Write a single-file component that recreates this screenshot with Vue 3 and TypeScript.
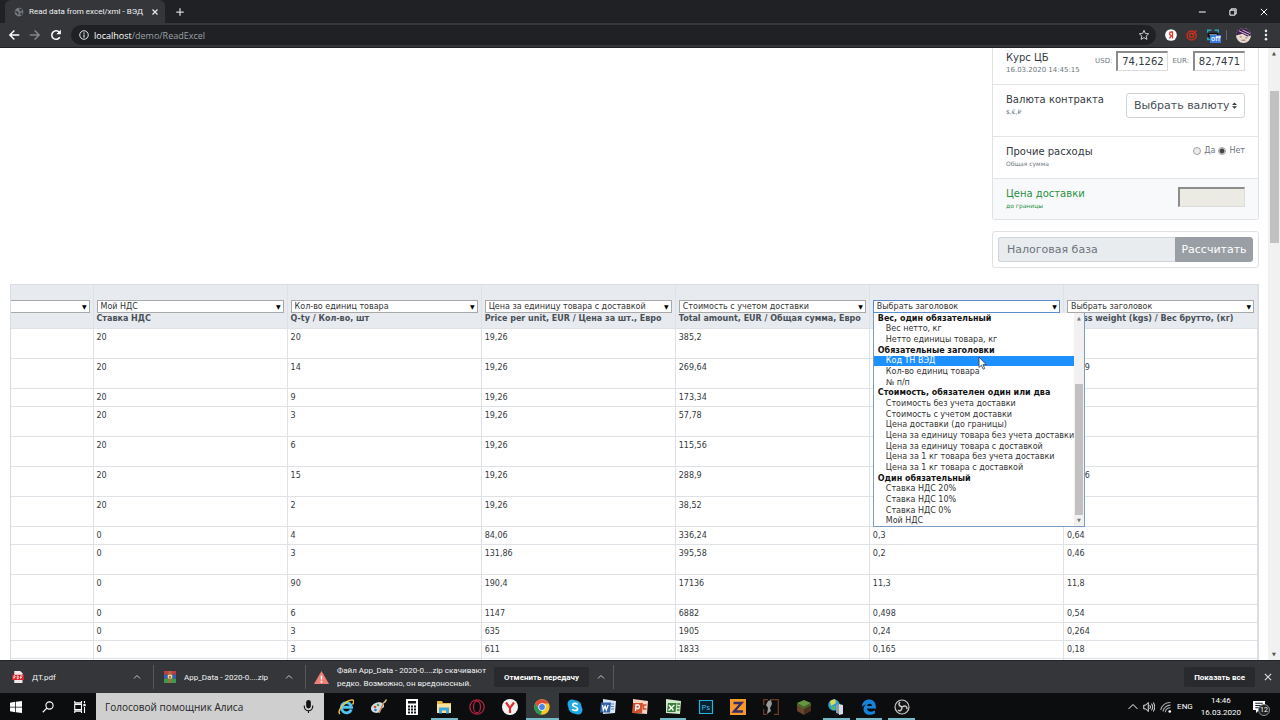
<script setup lang="ts">
import { ref } from 'vue'

interface Column { selected: string; title: string; open?: boolean }
interface Row { tall: boolean; cells: string[] }
interface MenuEntry { label: string; group?: boolean }

const columns: Column[] = [
  { selected: 'Мой НДС', title: 'Ставка НДС' },
  { selected: 'Кол-во единиц товара', title: 'Q-ty / Кол-во, шт' },
  { selected: 'Цена за единицу товара с доставкой', title: 'Price per unit, EUR / Цена за шт., Евро' },
  { selected: 'Стоимость с учетом доставки', title: 'Total amount, EUR / Общая сумма, Евро' },
  { selected: 'Выбрать заголовок', title: '', open: true },
  { selected: 'Выбрать заголовок', title: 'Gross weight (kgs) / Вес брутто, (кг)' },
]

const rows: Row[] = [
  { tall: true, cells: ['20', '20', '19,26', '385,2', '', ''] },
  { tall: true, cells: ['20', '14', '19,26', '269,64', '', '0,279'] },
  { tall: false, cells: ['20', '9', '19,26', '173,34', '', ''] },
  { tall: true, cells: ['20', '3', '19,26', '57,78', '', ''] },
  { tall: true, cells: ['20', '6', '19,26', '115,56', '', ''] },
  { tall: true, cells: ['20', '15', '19,26', '288,9', '', '0,296'] },
  { tall: true, cells: ['20', '2', '19,26', '38,52', '', ''] },
  { tall: false, cells: ['0', '4', '84,06', '336,24', '0,3', '0,64'] },
  { tall: true, cells: ['0', '3', '131,86', '395,58', '0,2', '0,46'] },
  { tall: true, cells: ['0', '90', '190,4', '17136', '11,3', '11,8'] },
  { tall: false, cells: ['0', '6', '1147', '6882', '0,498', '0,54'] },
  { tall: false, cells: ['0', '3', '635', '1905', '0,24', '0,264'] },
  { tall: false, cells: ['0', '3', '611', '1833', '0,165', '0,18'] },
  { tall: false, cells: ['', '', '', '', '', ''] },
]

const entries: MenuEntry[] = [
  { label: 'Вес, один обязательный', group: true },
  { label: 'Вес нетто, кг' },
  { label: 'Нетто единицы товара, кг' },
  { label: 'Обязательные заголовки', group: true },
  { label: 'Код ТН ВЭД' },
  { label: 'Кол-во единиц товара' },
  { label: '№ п/п' },
  { label: 'Стоимость, обязателен один или два', group: true },
  { label: 'Стоимость без учета доставки' },
  { label: 'Стоимость с учетом доставки' },
  { label: 'Цена доставки (до границы)' },
  { label: 'Цена за единицу товара без учета доставки' },
  { label: 'Цена за единицу товара с доставкой' },
  { label: 'Цена за 1 кг товара без учета доставки' },
  { label: 'Цена за 1 кг товара с доставкой' },
  { label: 'Один обязательный', group: true },
  { label: 'Ставка НДС 20%' },
  { label: 'Ставка НДС 10%' },
  { label: 'Ставка НДС 0%' },
  { label: 'Мой НДС' },
]

const active = ref('Код ТН ВЭД')
const other = ref('no')
const usd = ref('74,1262')
const eur = ref('82,7471')

const apps = [
  { id: 'ie', name: 'Internet Explorer' },
  { id: 'paint', name: 'Paint' },
  { id: 'calc', name: 'Калькулятор' },
  { id: 'files', name: 'Проводник', running: true },
  { id: 'opera', name: 'Opera' },
  { id: 'yandex', name: 'Яндекс Браузер' },
  { id: 'chrome', name: 'Chrome', running: true, current: true },
  { id: 'skype', name: 'Skype' },
  { id: 'word', name: 'Word' },
  { id: 'ppt', name: 'PowerPoint' },
  { id: 'excel', name: 'Excel', running: true },
  { id: 'ps', name: 'Photoshop' },
  { id: 'zed', name: 'Zed' },
  { id: 'game', name: 'Game' },
  { id: 'cube', name: 'Minecraft' },
  { id: 'iis', name: 'IIS', running: true },
  { id: 'edge', name: 'Edge', running: true },
  { id: 'obs', name: 'OBS', running: true },
]
</script>

<template>
  <div class="screen">
    <header class="browser">
      <div class="tabs">
        <div class="tab">
          <svg class="i10" viewBox="0 0 16 16"><circle cx="8" cy="8" r="7" fill="#777a7e" /><path d="M2 6l4 1 2 3-2 3-1-3-3-2zM8 2l5 2-1 3-3-1zM10 9l4 0-2 4-2-1z" fill="#34363a" /></svg>
          <span class="tab-title">Read data from excel/xml - ВЭД</span>
          <button class="plain" aria-label="Закрыть вкладку"><svg class="i8" viewBox="0 0 16 16"><path d="M3 3l10 10M13 3L3 13" stroke="#e8eaed" stroke-width="2.4" /></svg></button>
        </div>
        <button class="plain newtab" aria-label="Новая вкладка"><svg class="i10" viewBox="0 0 16 16"><path d="M8 2v12M2 8h12" stroke="#d5d7da" stroke-width="2" /></svg></button>
        <div class="window-buttons">
          <button class="plain" aria-label="Свернуть"><svg class="i10" viewBox="0 0 16 16"><path d="M3 8h11" stroke="#fff" stroke-width="1.6" /></svg></button>
          <button class="plain" aria-label="Восстановить"><svg class="i10" viewBox="0 0 16 16"><path d="M3 5h8v8H3zM5 5V3h8v8h-2" fill="none" stroke="#fff" stroke-width="1.6" /></svg></button>
          <button class="plain" aria-label="Закрыть"><svg class="i10" viewBox="0 0 16 16"><path d="M3 3l10 10M13 3L3 13" stroke="#fff" stroke-width="1.6" /></svg></button>
        </div>
      </div>
      <div class="toolbar">
        <button class="plain" aria-label="Назад"><svg class="i12" viewBox="0 0 16 16"><path d="M15 8H3M8.500 2L2.500 8l6 6" fill="none" stroke="#fff" stroke-width="2" /></svg></button>
        <button class="plain" aria-label="Вперёд"><svg class="i12" viewBox="0 0 16 16"><path d="M1 8h12M7.500 2l6 6-6 6" fill="none" stroke="#85878a" stroke-width="2" /></svg></button>
        <button class="plain" aria-label="Обновить"><svg class="i12" viewBox="0 0 16 16"><path d="M13 11a5.700 5.700 0 1 1-.5-6.500" fill="none" stroke="#fff" stroke-width="2" /><path d="M14.500 1v6h-6z" fill="#fff" /></svg></button>
        <div class="address">
          <svg class="i10" viewBox="0 0 16 16"><circle cx="8" cy="8" r="6.800" fill="none" stroke="#e8eaed" stroke-width="1.600" /><path d="M8 7v5M8 4v1.800" stroke="#e8eaed" stroke-width="1.900" /></svg>
          <span class="url"><b>localhost</b>/demo/ReadExcel</span>
          <svg class="i12" viewBox="0 0 16 16"><path d="M8 1.800l1.800 4.200 4.500.4-3.400 3 1 4.500L8 11.500l-3.900 2.400 1-4.500-3.400-3 4.500-.4z" fill="none" stroke="#dadce0" stroke-width="1.200" /></svg>
        </div>
        <div class="extensions">
          <svg class="i12" viewBox="0 0 16 16"><circle cx="8" cy="8" r="7.800" fill="#fff" /><path d="M10 12.500V4H8.500a2.300 2.300 0 0 0 0 4.700H10M8.500 8.700L6 12.500" fill="none" stroke="#e4312b" stroke-width="1.700" /></svg>
          <svg class="i12" viewBox="0 0 16 16"><circle cx="7.500" cy="8.500" r="6" fill="none" stroke="#c6311f" stroke-width="2" /><circle cx="7.500" cy="8.500" r="2.800" fill="none" stroke="#c6311f" stroke-width="1.800" /><path d="M8 8l6-6" stroke="#c6311f" stroke-width="1.800" /></svg>
          <div class="ext-badge">
            <svg class="i12" viewBox="0 0 16 16"><path d="M1 5V1.500h5M10 1.500h5V5M1 11v3h4" fill="none" stroke="#2ba3bd" stroke-width="2" /><path d="M1 5h14v6H1z" fill="#0e1114" /><path d="M3 7.500h10" stroke="#8b9094" stroke-width="1.500" /></svg>
            <span>off</span>
          </div>
          <i></i>
          <svg class="i15" viewBox="0 0 16 16"><circle cx="8" cy="8" r="8" fill="#eadbd0" /><path d="M0 8C0 3 4 0 8 0c5 0 8 4 8 8l-4 1-5-3-7 2z" fill="#41214f" /><path d="M3 3l11 5M7 2l8 4" stroke="#d9bfdc" stroke-width="1" /><path d="M4 9.500h2M10 10.500h2M6 13h4" stroke="#8a5a5e" /></svg>
          <button class="plain" aria-label="Меню"><svg class="i12" viewBox="0 0 16 16"><g fill="#e8eaed"><circle cx="8" cy="2.500" r="1.700" /><circle cx="8" cy="8" r="1.700" /><circle cx="8" cy="13.500" r="1.700" /></g></svg></button>
        </div>
      </div>
    </header>

    <div class="viewport">
      <main class="page">
        <aside class="side">
          <section class="card list">
            <div class="item rate">
              <div><h2>Курс ЦБ</h2><p class="date">16.03.2020 14:45:15</p></div>
              <div class="rates">
                <label for="usd">USD:</label><input id="usd" v-model="usd" type="text">
                <label for="eur">EUR:</label><input id="eur" v-model="eur" type="text">
              </div>
            </div>
            <div class="item currency">
              <div><h2><label for="currency">Валюта контракта</label></h2><p>$,€,₽</p></div>
              <div class="currency-select">
                <select id="currency"><option>Выбрать валюту</option></select>
                <svg viewBox="0 0 4 5"><path d="M2 0L0 2h4zM2 5L0 3h4z" fill="#343a40" /></svg>
              </div>
            </div>
            <div class="item other">
              <div><h2>Прочие расходы</h2><p>Общая сумма</p></div>
              <div class="radios">
                <input id="yes" v-model="other" type="radio" name="other" value="yes"><label for="yes">Да</label>
                <input id="no" v-model="other" type="radio" name="other" value="no"><label for="no">Нет</label>
              </div>
            </div>
            <div class="item delivery">
              <div><h2><label for="delivery">Цена доставки</label></h2><p>до границы</p></div>
              <input id="delivery" type="text" disabled>
            </div>
          </section>
          <form class="card calc" @submit.prevent>
            <input type="text" placeholder="Налоговая база" aria-label="Налоговая база" disabled>
            <button type="submit">Рассчитать</button>
          </form>
        </aside>

        <div class="sheet">
          <table>
            <colgroup><col class="first"><col v-for="(c, i) in columns" :key="i"></colgroup>
            <thead>
              <tr>
                <th class="cut">
                  <div class="picker"><select aria-label="Заголовок столбца"><option></option></select><span class="arrow">▼</span></div>
                </th>
                <th v-for="(c, i) in columns" :key="i">
                  <div class="picker" :class="{ open: c.open }">
                    <select :aria-label="c.title || 'Заголовок столбца'"><option>{{ c.selected }}</option></select><span class="arrow">▼</span>
                    <div v-if="c.open" class="menu">
                      <ul role="listbox" aria-label="Заголовки">
                        <li v-for="e in entries" :key="e.label" :class="{ group: e.group, active: e.label === active }">
                          <template v-if="e.group">{{ e.label }}</template>
                          <button v-else type="button" role="option" :aria-selected="e.label === active" @mouseenter="active = e.label">{{ e.label }}</button>
                        </li>
                      </ul>
                      <div class="menu-bar"><span>▲</span><i></i><span>▼</span></div>
                      <svg class="cursor" viewBox="0 0 9 14"><path d="M1 1v10.500l2.400-2.200 1.700 3.900 1.600-.7L5 8.700h3.300z" fill="#fff" stroke="#333" stroke-width=".8" /></svg>
                    </div>
                  </div>
                  <div class="col-title">{{ c.title }}</div>
                </th>
              </tr>
            </thead>
            <tbody>
              <tr v-for="(r, i) in rows" :key="i" :class="{ tall: r.tall }">
                <td></td>
                <td v-for="(v, j) in r.cells" :key="j">{{ v }}</td>
              </tr>
            </tbody>
          </table>
        </div>
      </main>
      <div class="scrollbar"><span>▲</span><i></i><span>▼</span></div>
    </div>

    <div class="downloads">
      <div class="download">
        <svg class="i12" viewBox="0 0 16 16"><path d="M3 0h8l3 3v13H3z" fill="#f3e7e7" /><path d="M0 5h16v7H0z" fill="#d8232a" /><path d="M2.500 10.500v-4h1.500q1.500 1 0 2H2.500M7 6.500v4h1q2-2 0-4zM11.500 10.500v-4H14M11.500 8.500h2" fill="none" stroke="#fff" stroke-width="1" /></svg>
        <span class="file">ДТ.pdf</span>
        <button class="plain" aria-label="Действия"><svg class="i8" viewBox="0 0 16 16"><path d="M2 11l6-6 6 6" fill="none" stroke="#c6c8cb" stroke-width="2" /></svg></button>
      </div>
      <div class="download archive">
        <svg class="i12" viewBox="0 0 16 16"><path d="M0 0h16v5H0z" fill="#c23a4c" /><path d="M0 5h16v5H0z" fill="#3460b8" /><path d="M0 10h16v6H0z" fill="#3d9852" /><path d="M6 0h4v16H6z" fill="#a87332" /><path d="M5 5h6v5H5z" fill="#f1d489" /><path d="M7 7h2v2H7z" fill="#59401f" /></svg>
        <span class="file">App_Data - 2020-0....zip</span>
        <button class="plain" aria-label="Действия"><svg class="i8" viewBox="0 0 16 16"><path d="M2 11l6-6 6 6" fill="none" stroke="#c6c8cb" stroke-width="2" /></svg></button>
      </div>
      <div class="download warn">
        <svg class="i15" viewBox="0 0 16 16"><path d="M8 1l8 14H0z" fill="#ee8079" /><path d="M8 6v4M8 11.500v2" stroke="#fff" stroke-width="1.600" /></svg>
        <span class="warn-text">Файл App_Data - 2020-0....zip скачивают<br>редко. Возможно, он вредоносный.</span>
        <button class="dark">Отменить передачу</button>
        <button class="plain" aria-label="Действия"><svg class="i8" viewBox="0 0 16 16"><path d="M2 11l6-6 6 6" fill="none" stroke="#c6c8cb" stroke-width="2" /></svg></button>
      </div>
      <button class="dark all">Показать все</button>
      <button class="plain" aria-label="Закрыть панель"><svg class="i10" viewBox="0 0 16 16"><path d="M3 3l10 10M13 3L3 13" stroke="#dadce0" stroke-width="1.800" /></svg></button>
    </div>

    <footer class="taskbar">
      <div class="system">
        <button class="plain" aria-label="Пуск"><svg class="i12" viewBox="0 0 16 16"><path d="M0 2.200L7 1v6.500H0zM8 .9L16 0v7.500H8zM0 8.500h7V15l-7-1.200zM8 8.500h8V16l-8-.9z" fill="#fff" /></svg></button>
        <button class="plain" aria-label="Поиск"><svg class="i12" viewBox="0 0 16 16"><circle cx="10" cy="6" r="4.800" fill="none" stroke="#fff" stroke-width="1.500" /><path d="M6.500 9.500L1 15" stroke="#fff" stroke-width="1.600" /></svg></button>
        <button class="plain" aria-label="Представление задач"><svg class="i12" viewBox="0 0 16 16"><path d="M1 4.500h9v7H1zM1 0v2.500h9V0M1 16v-2.500h9V16M14 0v3M14 8v8" fill="none" stroke="#fff" stroke-width="1.500" /><path d="M12.500 4h3v3h-3z" fill="#fff" /></svg></button>
      </div>
      <div class="search">
        <input type="text" placeholder="Голосовой помощник Алиса" aria-label="Голосовой помощник Алиса">
        <svg class="i15" viewBox="0 0 16 16"><rect x="5.500" y="1" width="5" height="9" rx="2.500" fill="#111" /><path d="M3.500 7v1a4.500 4.500 0 0 0 9 0V7M8 12.500V15" fill="none" stroke="#111" stroke-width="1.200" /></svg>
      </div>
      <nav class="apps">
        <button v-for="a in apps" :key="a.id" class="app" :class="{ running: a.running, current: a.current }" :aria-label="a.name">
          <svg v-if="a.id === 'ie'" class="i16" viewBox="0 0 16 16"><path d="M13.300 10.500A5.100 5.100 0 1 1 13.600 8.300H4.500" fill="none" stroke="#52c3f1" stroke-width="2.900" /><path d="M2 15C-2 12 8 1 14 1c3 0 1.500 3 .5 4.500" fill="none" stroke="#f4c63d" stroke-width="1.400" /></svg>
          <svg v-else-if="a.id === 'paint'" class="i16" viewBox="0 0 16 16"><path d="M0 9.500c0-4 6-7 10-6 4 1 4 5 1 6-2 .5-1 2-2 3-3 3-9 1-9-3z" fill="#cfdde7" /><circle cx="4" cy="8" r="1.300" fill="#d34b37" /><circle cx="7" cy="6" r="1.300" fill="#4d9d4b" /><circle cx="4.500" cy="11" r="1.300" fill="#2f77c8" /><path d="M8 14l5-11" stroke="#c98b4d" stroke-width="1.600" /><path d="M12.500 3.500L15 0l1 1-2 3z" fill="#e7cf9a" /></svg>
          <svg v-else-if="a.id === 'calc'" class="i16" viewBox="0 0 16 16"><path d="M2 0h12v16H2z" fill="#fff" /><path d="M4 2h8v2.500H4zM4 6.500h2v2H4zM7 6.500h2v2H7zM10 6.500h2v2h-2zM4 9.500h2v2H4zM7 9.500h2v2H7zM10 9.500h2v2h-2zM4 12.500h2v2H4zM7 12.500h2v2H7zM10 12.500h2v2h-2z" fill="#14171a" /></svg>
          <svg v-else-if="a.id === 'files'" class="i16" viewBox="0 0 16 16"><path d="M1 2h5l1 2h8v10H1z" fill="#e3b64c" /><path d="M1 5h14v9H1z" fill="#fbe29a" /><path d="M3 8.500h10v6h-3v-3H6v3H3z" fill="#41a8dd" /></svg>
          <svg v-else-if="a.id === 'opera'" class="i16" viewBox="0 0 16 16"><circle cx="8" cy="8" r="7.200" fill="none" stroke="#b0233f" stroke-width="1.300" /><ellipse cx="8" cy="8" rx="3.500" ry="6" fill="none" stroke="#b0233f" stroke-width="1.300" /></svg>
          <svg v-else-if="a.id === 'yandex'" class="i16" viewBox="0 0 16 16"><circle cx="8" cy="8" r="8" fill="#f3f3f3" /><path d="M4 3.500L8 9l4-5.500M8 9v5" fill="none" stroke="#e22b2b" stroke-width="2.200" /></svg>
          <svg v-else-if="a.id === 'chrome'" class="i16" viewBox="0 0 16 16"><circle cx="8" cy="8" r="7.700" fill="#f6c52c" /><path d="M1.300 4.200A7.700 7.700 0 0 1 14.700 4.500H8L4.700 9.500z" fill="#dc4b3e" /><path d="M1.300 4.200L4.800 10l3.200 1.500L6.800 15.600A7.700 7.700 0 0 1 1.300 4.200z" fill="#239b56" /><circle cx="8" cy="8" r="3.700" fill="#fff" /><circle cx="8" cy="8" r="2.900" fill="#4384ee" /></svg>
          <svg v-else-if="a.id === 'skype'" class="i16" viewBox="0 0 16 16"><circle cx="5" cy="5" r="4.500" fill="#20a7e4" /><circle cx="11" cy="11" r="4.500" fill="#20a7e4" /><circle cx="8" cy="8" r="6.700" fill="#20a7e4" /><path d="M10.500 5.500C9.500 3.800 5.500 4 5.700 6c.2 2 4.800 1.500 4.900 3.700.1 2.200-4.300 2.400-5.300.5" fill="none" stroke="#fff" stroke-width="1.700" /></svg>
          <svg v-else-if="a.id === 'word'" class="i16" viewBox="0 0 16 16"><path d="M3 0l13 2-1 12-12 1z" fill="#dce7f5" /><path d="M11 5h3M11 7.500h3M11 10h3" stroke="#5681bd" /><path d="M1 3.500h10l-1 10H0z" fill="#3261a8" /><path d="M2.500 6l.8 5 1.800-4 1.200 4 1.900-5" fill="none" stroke="#fff" stroke-width="1.300" /></svg>
          <svg v-else-if="a.id === 'ppt'" class="i16" viewBox="0 0 16 16"><path d="M1 0l15 2-1 13-14-1z" fill="#f8d4c6" /><path d="M1 4h10l-1 10H0z" fill="#d64f2c" /><path d="M3.500 12l.5-6h2.500q2 1.700 0 3.500H4" fill="none" stroke="#fff" stroke-width="1.300" /><path d="M14.500 6h-3v4h3" fill="none" stroke="#d64f2c" stroke-width="1.500" /></svg>
          <svg v-else-if="a.id === 'excel'" class="i16" viewBox="0 0 16 16"><path d="M1 0l15 2-1 13-14-1z" fill="#d4e9cb" /><path d="M3 4h8.500l-1 9H2z" fill="#347d3a" /><path d="M4 6l4.500 5.500M9.300 6l-5.800 5.500" stroke="#fff" stroke-width="1.500" /><path d="M12 5h3M12 8h2.500M12 11h2.500" stroke="#347d3a" stroke-width="1.300" /></svg>
          <svg v-else-if="a.id === 'ps'" class="i16" viewBox="0 0 16 16"><path d="M1.500 1.500h13v13h-13z" fill="#06202e" stroke="#2bb1df" stroke-width="1.200" /><text x="3.500" y="11" font-size="8" fill="#3cc3ef">Ps</text></svg>
          <svg v-else-if="a.id === 'zed'" class="i16" viewBox="0 0 16 16"><path d="M0 0h16v16H0z" fill="#f59b28" /><path d="M3.500 4h8L4 12.500h9" fill="none" stroke="#3a2a6c" stroke-width="2.400" /></svg>
          <svg v-else-if="a.id === 'game'" class="i16" viewBox="0 0 16 16"><path d="M5 .7H.7V6M7 .7h8.300v14.600H11M.7 10v5.300H4" fill="none" stroke="#6f3b20" stroke-width="1.300" /><path d="M5 2l3-1 1 4-2 4 1 3-4 3 1-6-2-3z" fill="#999b9a" /></svg>
          <svg v-else-if="a.id === 'cube'" class="i16" viewBox="0 0 16 16"><path d="M8 1l7 3-7 4-7-4z" fill="#66963f" /><path d="M1 4l7 4v8l-7-4z" fill="#69452d" /><path d="M15 4L8 8v8l7-4z" fill="#4b301f" /><path d="M1 4l7 4v2L1 6zM15 4L8 8v2l7-4z" fill="#456f2b" /></svg>
          <svg v-else-if="a.id === 'iis'" class="i16" viewBox="0 0 16 16"><circle cx="6" cy="6" r="5.800" fill="#2f9fd3" /><path d="M2 2l5-2 1 4-5 3z" fill="#e2d851" /><path d="M3 8l4-1 0 4-2 0z" fill="#62b94c" /><path d="M8 6l3-1v10l-3-1z" fill="#8f9caa" /><path d="M11 5l4 1v9l-4 1z" fill="#d5dde4" /></svg>
          <svg v-else-if="a.id === 'edge'" class="i16" viewBox="0 0 16 16"><path d="M1 8C1 3 4 .5 8.500.5S15 4 15 9.500H6c.3 3.500 5 4 8 2v3C8 17.500 2.500 15 2.500 10c0-2 1-3.500 3-4.500-2 .3-3.500 1.200-4.500 2.500zM6 7h5c0-3-4.500-3-5 0z" fill="#1583dd" /></svg>
          <svg v-else class="i16" viewBox="0 0 16 16"><circle cx="8" cy="8" r="7" fill="#161616" stroke="#c9c9c9" stroke-width="1.200" /><path d="M8 8c-3-1-4-3-2-5M8 8c3-2 5-1 5 2M8 8c0 3-2 5-4 3" fill="none" stroke="#c9c9c9" stroke-width="1.500" /></svg>
        </button>
      </nav>
      <div class="tray">
        <svg class="i10" viewBox="0 0 16 16"><path d="M1 11l7-7 7 7" fill="none" stroke="#fff" stroke-width="1.600" /></svg>
        <svg class="i12" viewBox="0 0 16 16"><path d="M1 5.500h2.500L7 2v12l-3.500-3.500H1zM9 5.500q2 2.500 0 5M11.500 3.500q3.300 4.500 0 9M14 2q4 6 0 12" fill="none" stroke="#fff" stroke-width="1.200" /></svg>
        <svg class="i12" viewBox="0 0 16 16"><path d="M1 12A12 12 0 0 1 14 2M4 14A10 10 0 0 1 14 5.500M7 15a7 7 0 0 1 7-6" fill="none" stroke="#a9a9a9" stroke-width="1.500" /><circle cx="13" cy="14" r="1.800" fill="#fff" /></svg>
        <span class="lang">ENG</span>
        <span class="clock">14:46<br>16.03.2020</span>
        <div class="notes">
          <svg class="i12" viewBox="0 0 16 16"><path d="M0 0h16v12H8l-4 4v-4H0z" fill="#fff" /><path d="M3 3h10M3 6h10M3 9h6" stroke="#17191b" stroke-width="1.300" /></svg>
          <span>12</span>
        </div>
      </div>
    </footer>
  </div>
</template>

<style>
html, body, #app { height: 100%; }
body { overflow: hidden; }
</style>

<style scoped>
* { box-sizing: border-box; }
.screen { height: 100vh; display: flex; flex-direction: column; font-family: "DejaVu Sans", Verdana, sans-serif; background: #fff; color: #212529; overflow: hidden; }
svg { display: block; flex: none; }
.i8 { width: 8px; height: 8px; }
.i10 { width: 10px; height: 10px; }
.i12 { width: 12px; height: 12px; }
.i15 { width: 15px; height: 15px; }
.i16 { width: 16px; height: 16px; }
button, input, select { font-family: inherit; margin: 0; border-radius: 0; }
.plain { border: 0; padding: 0; background: none; display: flex; align-items: center; justify-content: center; flex: none; }

.browser { flex: none; font-family: "Open Sans", "Noto Sans", sans-serif; }
.tabs { height: 23px; background: #202124; display: flex; align-items: center; }
.tab { margin-left: 5px; width: 160px; height: 23px; padding: 0 6px 0 9px; border-radius: 6px 6px 0 0; background: #35363a; display: flex; align-items: center; gap: 5px; }
.tab-title { flex: 1; overflow: hidden; white-space: nowrap; font-family: Roboto, sans-serif; font-size: 8px; color: #f1f3f4; }
.newtab { margin-left: 10px; }
.window-buttons { margin-left: auto; display: flex; gap: 21px; padding-right: 11px; }
.toolbar { height: 25px; background: #35363a; border-bottom: 1px solid #202124; display: flex; align-items: center; gap: 9px; padding: 0 8px; }
.address { flex: 1; height: 20px; border-radius: 10px; background: #202124; display: flex; align-items: center; gap: 5px; padding: 0 6px 0 8px; }
.url { flex: 1; font-size: 9px; color: #9aa0a6; }
.url b { font-weight: 400; color: #fff; }
.extensions { display: flex; align-items: center; gap: 9px; }
.extensions i { width: 1px; height: 10px; margin-left: -2px; background: #5f6368; }
.ext-badge { position: relative; }
.ext-badge span { position: absolute; left: 3px; top: 6px; background: #3b7de0; color: #fff; font-size: 7px; line-height: 8px; padding: 0 1px; font-weight: 600; }

.viewport { flex: 1; min-height: 0; display: flex; }
.page { flex: 1; min-width: 0; overflow: hidden; padding: 0 9px 0 10px; }
.side { width: 267px; margin-left: auto; }
.card { border: 1px solid #dfe1e4; border-radius: 3px; }
.list { border-top: 0; border-radius: 0 0 3px 3px; }
.item { display: flex; justify-content: space-between; align-items: flex-start; padding: 8px 13px 0; border-bottom: 1px solid #e2e4e7; }
.item:last-child { border-bottom: 0; }
h2 { margin: 0; font-size: 11px; line-height: 14px; font-weight: 400; color: #343a40; white-space: nowrap; }
.item h2 { font-size: 10px; }
p { margin: 0; font-size: 6px; line-height: 10px; color: #6c757d; }
.date { font-size: 7px; }
.item input[type="text"] { border: 1px solid #dcdcdc; border-top: 2px solid #8c8c8c; border-left: 2px solid #8c8c8c; height: 20px; padding: 0 2px; font-size: 10px; color: #343a40; text-align: center; }
.rate { height: 37px; padding-top: 3px; }
.rates { display: flex; align-items: center; gap: 4px; color: #6c757d; }
.rates label { font-size: 7px; }
.rates input { width: 52px; }
.currency { height: 52px; }
.currency-select { position: relative; }
.currency-select select { appearance: none; height: 25px; width: 119px; padding: 0 7px; border: 1px solid #ced4da; border-radius: 3px; background: #fff; color: #495057; font-size: 11px; }
.currency-select svg { position: absolute; right: 8px; top: 9px; width: 5px; height: 7px; }
.other { height: 42px; }
.radios { display: flex; align-items: center; gap: 3px; font-size: 8px; line-height: 12px; color: #6c757d; }
.radios input { appearance: none; width: 8px; height: 8px; border: 1px solid #a3a3a3; border-radius: 50%; background: #ececec; }
.radios input:checked { background: radial-gradient(circle, #444 0 2px, #ececec 3px); }
.delivery { height: 40px; background: #f8f9fa; }
.delivery h2, .delivery p { color: #28913f; }
.delivery input[type="text"] { width: 67px; background: #ebebe4; }
.calc { margin-top: 11px; padding: 5px; height: 37px; display: flex; }
.calc input { flex: 1; min-width: 0; border: 1px solid #ced4da; border-right: 0; border-radius: 3px 0 0 3px; background: #e9ecef; font-size: 11px; padding: 0 8px; }
.calc input::placeholder { color: #6c757d; opacity: 1; }
.calc button { width: 78px; border: 1px solid #989da2; border-radius: 0 3px 3px 0; background: #9a9fa5; color: #fff; font-size: 11px; padding: 0; }

.sheet { margin-top: 16px; border: 1px solid #d9dce0; }
table { width: 100%; table-layout: fixed; border-collapse: collapse; font-size: 8px; line-height: 11px; }
.first { width: 82px; }
th { height: 43px; padding: 15px 3px 3px; background: #e7eaee; border-right: 1px solid #dee2e6; border-bottom: 1px solid #dee2e6; text-align: left; vertical-align: top; color: #495057; white-space: nowrap; }
th.cut { padding-left: 0; }
td { height: 18px; padding: 3px; vertical-align: top; border-right: 1px solid #dee2e6; border-bottom: 1px solid #dee2e6; color: #343a40; }
.tall td { height: 30px; }
.picker { position: relative; height: 13px; }
.picker select { appearance: none; display: block; width: 100%; height: 13px; padding: 0 3px; border: 1px solid #a9a9a9; background: #fff; color: #333; font-size: 8px; line-height: 11px; }
.cut .picker select { border-left: 0; }
.picker.open select { border-color: #5b8cc9; }
.arrow { position: absolute; right: 3px; top: 1px; font-size: 6px; line-height: 11px; color: #000; font-weight: 400; pointer-events: none; }
.menu { position: absolute; z-index: 2; left: 0; top: 13px; width: 212px; height: 214px; display: flex; background: #fff; border: 1px solid #7c9cc4; border-top: 0; color: #222; }
.menu ul { flex: 1; min-width: 0; margin: 0; padding: 0; list-style: none; display: flex; flex-direction: column; }
.menu li { flex: 1; min-height: 0; padding-left: 12px; font-size: 8px; line-height: 11px; font-weight: 400; display: flex; align-items: center; }
.menu li.group { padding-left: 4px; font-weight: 700; color: #111; }
.menu li.active { background: #1e90ff; }
.menu li button { border: 0; padding: 0; background: none; font-size: 8px; line-height: 11px; color: #333; white-space: nowrap; }
.menu li.active button { color: #fff; }
.menu-bar { width: 10px; background: #f1f1f1; display: flex; flex-direction: column; align-items: center; font-size: 5px; line-height: 11px; color: #777; }
.menu-bar i { width: 8px; height: 131px; margin-top: auto; background: #c1c1c1; }
.cursor { position: absolute; left: 104px; top: 43px; width: 9px; height: 14px; }
.scrollbar { width: 12px; background: #f1f1f1; display: flex; flex-direction: column; align-items: center; justify-content: space-between; font-size: 5px; line-height: 11px; color: #505050; }
.scrollbar i { width: 9px; height: 152px; margin: 32px 0 auto; background: #c1c1c1; }

.downloads { flex: none; height: 33px; background: #35363a; display: flex; align-items: center; font-family: Roboto, "Noto Sans", sans-serif; font-size: 8px; color: #f1f3f4; border-top: 1px solid #232427; padding-right: 7px; }
.download { height: 24px; width: 154px; padding: 0 12px; display: flex; align-items: center; gap: 8px; border-right: 1px solid #55575b; }
.archive { width: 152px; padding-left: 10px; }
.file { flex: 1; white-space: nowrap; }
.warn { width: 308px; padding: 0 11px 0 8px; }
.warn-text { flex: 1; line-height: 13px; white-space: nowrap; }
.dark { height: 20px; border: 0; border-radius: 2px; background: #292a2d; color: #fff; font-size: 8px; font-weight: 700; padding: 0 10px; white-space: nowrap; }
.all { margin-left: auto; margin-right: 8px; }

.taskbar { flex: none; height: 27px; background: #0c0d0e; display: flex; font-family: "Open Sans", "Noto Sans", sans-serif; color: #fff; }
.system { width: 96px; display: flex; }
.system button { flex: 1; }
.search { width: 228px; background: #cfcfcf; display: flex; align-items: center; padding: 0 8px 0 9px; }
.search input { flex: 1; min-width: 0; border: 0; padding: 0; background: none; font-size: 10px; }
.search input::placeholder { color: #222; opacity: 1; }
.apps { width: 588px; margin-left: 6px; display: flex; }
.app { flex: 1; border: 0; padding: 0 3px; background: none; display: flex; align-items: center; justify-content: center; position: relative; }
.app.current { background: #34383b; }
.app.running::after { content: ""; position: absolute; left: 3px; right: 3px; bottom: 0; height: 2px; background: #76b9c9; }
.app.current::after { left: 0; right: 0; }
.tray { margin-left: auto; display: flex; align-items: center; gap: 5px; font-family: Roboto, sans-serif; font-size: 8px; padding-right: 9px; }
.clock { text-align: center; line-height: 12px; margin-left: 3px; }
.notes { position: relative; margin-left: 7px; padding-right: 6px; }
.notes span { position: absolute; left: 5px; top: 3px; width: 12px; height: 12px; border: 1px solid #909090; border-radius: 50%; background: #222; font-size: 7px; line-height: 10px; text-align: center; }
</style>
